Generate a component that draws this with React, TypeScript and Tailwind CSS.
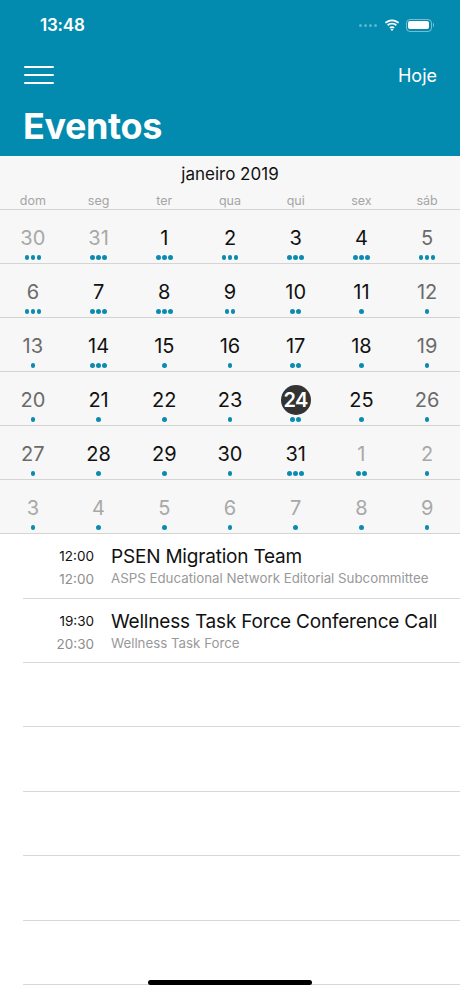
import React from 'react';

type Day = { n: number; kind: 'cur' | 'wknd' | 'other'; dots: number; today?: boolean };

const rows: Day[][] = [
  [
    { n: 30, kind: 'other', dots: 3 },
    { n: 31, kind: 'other', dots: 3 },
    { n: 1, kind: 'cur', dots: 3 },
    { n: 2, kind: 'cur', dots: 3 },
    { n: 3, kind: 'cur', dots: 3 },
    { n: 4, kind: 'cur', dots: 3 },
    { n: 5, kind: 'wknd', dots: 3 },
  ],
  [
    { n: 6, kind: 'wknd', dots: 3 },
    { n: 7, kind: 'cur', dots: 3 },
    { n: 8, kind: 'cur', dots: 3 },
    { n: 9, kind: 'cur', dots: 2 },
    { n: 10, kind: 'cur', dots: 2 },
    { n: 11, kind: 'cur', dots: 1 },
    { n: 12, kind: 'wknd', dots: 1 },
  ],
  [
    { n: 13, kind: 'wknd', dots: 1 },
    { n: 14, kind: 'cur', dots: 3 },
    { n: 15, kind: 'cur', dots: 1 },
    { n: 16, kind: 'cur', dots: 1 },
    { n: 17, kind: 'cur', dots: 2 },
    { n: 18, kind: 'cur', dots: 1 },
    { n: 19, kind: 'wknd', dots: 1 },
  ],
  [
    { n: 20, kind: 'wknd', dots: 1 },
    { n: 21, kind: 'cur', dots: 1 },
    { n: 22, kind: 'cur', dots: 1 },
    { n: 23, kind: 'cur', dots: 1 },
    { n: 24, kind: 'cur', dots: 2, today: true },
    { n: 25, kind: 'cur', dots: 1 },
    { n: 26, kind: 'wknd', dots: 1 },
  ],
  [
    { n: 27, kind: 'wknd', dots: 1 },
    { n: 28, kind: 'cur', dots: 1 },
    { n: 29, kind: 'cur', dots: 1 },
    { n: 30, kind: 'cur', dots: 1 },
    { n: 31, kind: 'cur', dots: 3 },
    { n: 1, kind: 'other', dots: 2 },
    { n: 2, kind: 'other', dots: 1 },
  ],
  [3, 4, 5, 6, 7, 8, 9].map((n) => ({ n, kind: 'other' as const, dots: 1 })),
];

const weekdays = ['dom', 'seg', 'ter', 'qua', 'qui', 'sex', 'sáb'];

const events = [
  { start: '12:00', end: '12:00', title: 'PSEN Migration Team', group: 'ASPS Educational Network Editorial Subcommittee' },
  { start: '19:30', end: '20:30', title: 'Wellness Task Force Conference Call', group: 'Wellness Task Force' },
];

const colorFor = (k: Day['kind']) =>
  k === 'cur' ? 'text-[#111111]' : k === 'wknd' ? 'text-[#6b6b6b]' : 'text-[#a8a8a8]';

const StatusBar = () => (
  <div className="h-[46px] flex items-center justify-between pl-[40px] pr-[26px] text-white">
    <span className="text-[17px] font-semibold tracking-[-0.2px] mt-[6px]">13:48</span>
    <div className="flex items-center gap-[6px] mt-[4px]">
      <div className="flex items-center gap-[2px] mr-[1px]">
        {[0, 1, 2, 3].map((i) => (
          <span key={i} className="w-[3px] h-[3px] rounded-full bg-white/35" />
        ))}
      </div>
      <svg width="16" height="12" viewBox="0 0 16 12" fill="white">
        <path d="M8 2.2c2.3 0 4.4.9 6 2.4l1.2-1.3C13.3 1.4 10.8.4 8 .4S2.7 1.4.8 3.3L2 4.6c1.6-1.5 3.7-2.4 6-2.4z" />
        <path d="M8 5.6c1.4 0 2.7.5 3.7 1.4l1.2-1.3C11.6 4.5 9.9 3.8 8 3.8S4.4 4.5 3.1 5.7L4.3 7c1-.9 2.3-1.4 3.7-1.4z" />
        <path d="M8 9c.6 0 1.1.2 1.5.6l1.2-1.3C10 7.6 9 7.2 8 7.2s-2 .4-2.7 1.1l1.2 1.3C6.9 9.2 7.4 9 8 9z" />
        <path d="M8 12l1.5-1.6C9.1 10 8.6 9.8 8 9.8s-1.1.2-1.5.6z" />
      </svg>
      <div className="flex items-center">
        <div className="w-[26px] h-[13px] rounded-[4px] border border-white/45 p-[1.5px]">
          <div className="w-full h-full rounded-[2px] bg-white" />
        </div>
        <div className="w-[1.5px] h-[4px] rounded-r bg-white/45 ml-[1px]" />
      </div>
    </div>
  </div>
);

const Dots = ({ count }: { count: number }) => (
  <div className="flex gap-[1.5px] h-[5px] mt-[4px]">
    {Array.from({ length: count }).map((_, i) => (
      <span key={i} className="w-[4.5px] h-[4.5px] rounded-full bg-[#0b8bb0]" />
    ))}
  </div>
);

export default function App() {
  return (
    <div
      className="relative w-[460px] h-[996px] overflow-hidden bg-white flex flex-col"
      style={{ fontFamily: 'Inter, "Noto Sans", "Liberation Sans", sans-serif' }}
    >
      <div className="bg-[#028bae] h-[156px] flex flex-col shrink-0">
        <StatusBar />
        <div className="h-[56px] flex items-center justify-between pl-[24px] pr-[23px] text-white">
          <div className="flex flex-col gap-[6px] w-[30px] mt-[2px]">
            <span className="h-[2px] bg-white rounded" />
            <span className="h-[2px] bg-white rounded" />
            <span className="h-[2px] bg-white rounded" />
          </div>
          <span className="text-[18px] mt-[2px]">Hoje</span>
        </div>
        <div className="pl-[23px] pt-[3px] text-white text-[36px] font-bold leading-[42px] tracking-[-0.4px]">Eventos</div>
      </div>

      <div className="bg-[#f7f7f7] shrink-0">
        <div className="h-[33px] flex items-end justify-center text-[17px] text-[#111] pb-[2px]">janeiro 2019</div>
        <div className="grid grid-cols-7 h-[21px] items-center border-b border-[#d4d4d4]">
          {weekdays.map((w) => (
            <span key={w} className="text-center text-[12.5px] text-[#a5a5a5] mt-[3px]">
              {w}
            </span>
          ))}
        </div>
        {rows.map((row, ri) => (
          <div key={ri} className="grid grid-cols-7 h-[54px] border-b border-[#d4d4d4]">
            {row.map((d, di) => (
              <div key={di} className="flex flex-col items-center pt-[15px]">
                {d.today ? (
                  <span className="w-[30px] h-[30px] -my-[2px] rounded-full bg-[#333333] text-white font-semibold text-[20px] leading-[30px] text-center tracking-[-0.5px]">
                    {d.n}
                  </span>
                ) : (
                  <span className={`text-[20px] leading-[26px] ${colorFor(d.kind)}`}>{d.n}</span>
                )}
                <Dots count={d.dots} />
              </div>
            ))}
          </div>
        ))}
      </div>

      <div className="flex flex-col">
        {events.map((e) => (
          <div key={e.title} className="h-[64.5px] ml-[23px] border-b border-[#d8d8d8] flex pt-[13px]">
            <div className="w-[71px] flex flex-col items-end text-[13.5px]">
              <span className="text-[#111] leading-[18px]">{e.start}</span>
              <span className="text-[#8e8e8e] leading-[18px] mt-[5px]">{e.end}</span>
            </div>
            <div className="ml-[17px] flex flex-col min-w-0">
              <span className="text-[19px] text-[#111] leading-[24px] -mt-[2px] whitespace-nowrap tracking-[-0.2px]">{e.title}</span>
              <span className="text-[13.3px] text-[#999] leading-[18px] whitespace-nowrap">{e.group}</span>
            </div>
          </div>
        ))}
        {[0, 1, 2, 3, 4].map((i) => (
          <div key={i} className="h-[64.4px] ml-[23px] border-b border-[#d8d8d8]" />
        ))}
      </div>

      <div className="absolute left-[148px] top-[980px] w-[164px] h-[5px] rounded-full bg-black" />
    </div>
  );
}
